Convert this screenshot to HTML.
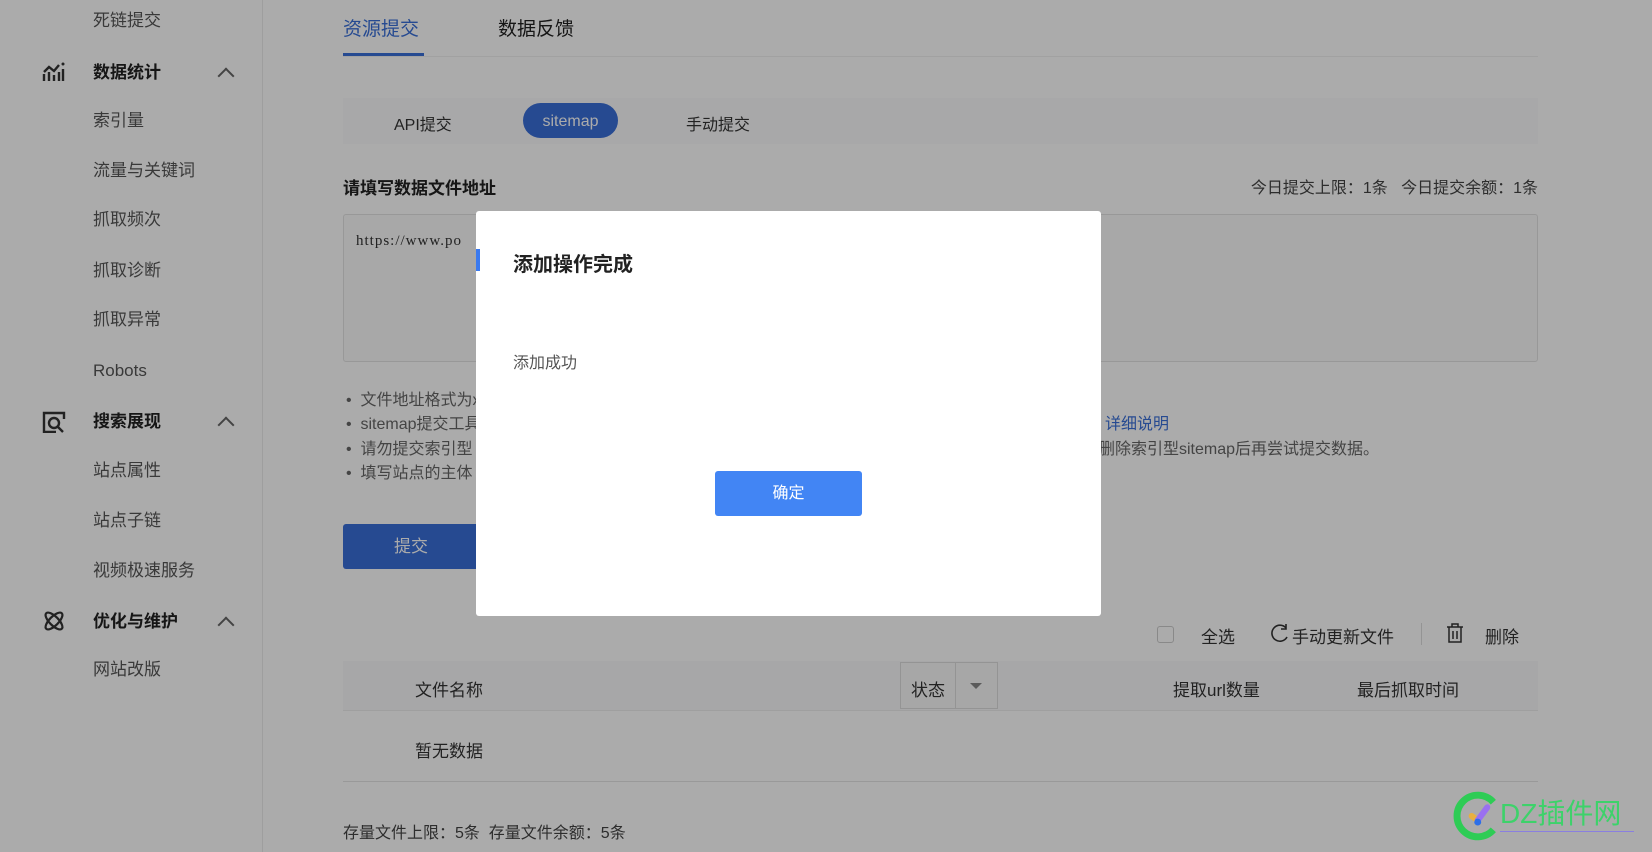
<!DOCTYPE html>
<html><head><meta charset="utf-8"><style>
*{margin:0;padding:0;box-sizing:border-box}
body{width:1652px;height:852px;overflow:hidden;background:#fff;font-family:"Liberation Sans","Noto Sans CJK SC",sans-serif;position:relative;color:#333}
.a{position:absolute;white-space:nowrap}
.side{position:absolute;left:0;top:0;width:263px;height:852px;background:#fff;border-right:1px solid #ececec}
.si{position:absolute;left:93px;font-size:17px;color:#555;line-height:20px}
.sh{position:absolute;left:93px;font-size:17px;color:#222;font-weight:bold;line-height:20px}
.chev{position:absolute;left:220px;width:12px;height:12px;border-left:2px solid #666;border-top:2px solid #666;transform:rotate(45deg)}
.ov{position:absolute;left:0;top:0;width:1652px;height:852px;background:rgba(0,0,0,0.33)}
.bl{font-size:16px;color:#666;line-height:20px}
</style></head><body>
<div class="side">
<div class="si" style="top:11px">死链提交</div>
<svg class="a" style="left:42px;top:61px" width="24" height="22" viewBox="0 0 24 22"><path d="M2 20v-7M7 20v-9M12 20v-6M17 20v-9M2 11l5-5 5 4 5-6" stroke="#333" stroke-width="2.4" fill="none"/><circle cx="21" cy="3" r="1.5" fill="#333"/><path d="M21 8v12" stroke="#333" stroke-width="2.4"/></svg>
<div class="sh" style="top:63px">数据统计</div><div class="chev" style="top:70px"></div>
<div class="si" style="top:111px">索引量</div>
<div class="si" style="top:161px">流量与关键词</div>
<div class="si" style="top:210px">抓取频次</div>
<div class="si" style="top:261px">抓取诊断</div>
<div class="si" style="top:310px">抓取异常</div>
<div class="si" style="top:361px">Robots</div>
<svg class="a" style="left:42px;top:411px" width="24" height="22" viewBox="0 0 24 22"><path d="M22 8V2H2v19h12" stroke="#333" stroke-width="2.4" fill="none"/><circle cx="12" cy="12" r="5" stroke="#333" stroke-width="2.4" fill="none"/><path d="M16 16l5 5" stroke="#333" stroke-width="2.4"/></svg>
<div class="sh" style="top:412px">搜索展现</div><div class="chev" style="top:419px"></div>
<div class="si" style="top:461px">站点属性</div>
<div class="si" style="top:511px">站点子链</div>
<div class="si" style="top:561px">视频极速服务</div>
<svg class="a" style="left:42px;top:609px" width="24" height="24" viewBox="0 0 24 24"><ellipse cx="12" cy="12" rx="11" ry="4.5" transform="rotate(45 12 12)" stroke="#333" stroke-width="2.2" fill="none"/><ellipse cx="12" cy="12" rx="11" ry="4.5" transform="rotate(-45 12 12)" stroke="#333" stroke-width="2.2" fill="none"/></svg>
<div class="sh" style="top:612px">优化与维护</div><div class="chev" style="top:619px"></div>
<div class="si" style="top:660px">网站改版</div>
</div>

<div class="a" style="left:343px;top:14px;font-size:19px;color:#3a6fd8">资源提交</div>
<div class="a" style="left:343px;top:53px;width:81px;height:3px;background:#3a6fd8"></div>
<div class="a" style="left:498px;top:14px;font-size:19px;color:#222">数据反馈</div>
<div class="a" style="left:343px;top:56px;width:1195px;height:1px;background:#f0f0f0"></div>

<div class="a" style="left:343px;top:98px;width:1195px;height:46px;background:#fbfbfc"></div>
<div class="a" style="left:394px;top:111px;font-size:16px;color:#333">API提交</div>
<div class="a" style="left:523px;top:103px;width:95px;height:35px;border-radius:18px;background:#3a6fd8;color:#fff;font-size:16px;text-align:center;line-height:37px">sitemap</div>
<div class="a" style="left:686px;top:111px;font-size:16px;color:#333">手动提交</div>

<div class="a" style="left:343px;top:174px;font-size:17px;font-weight:bold;color:#222">请填写数据文件地址</div>
<div class="a" style="right:114px;top:174px;font-size:16px;color:#444">今日提交上限：1条 &nbsp; 今日提交余额：1条</div>
<div class="a" style="left:343px;top:214px;width:1195px;height:148px;border:1px solid #e3e3e3;background:#fbfbfb;border-radius:3px"></div>
<div class="a" style="left:356px;top:233px;font-family:'Liberation Serif',serif;font-size:15px;color:#333;letter-spacing:1px">https://www.po</div>

<div class="a bl" style="left:346px;top:391px">•&nbsp; 文件地址格式为xml</div>
<div class="a bl" style="left:346px;top:415px">•&nbsp; sitemap提交工具</div>
<div class="a bl" style="left:346px;top:440px">•&nbsp; 请勿提交索引型</div>
<div class="a bl" style="left:346px;top:464px">•&nbsp; 填写站点的主体</div>
<div class="a bl" style="left:1105px;top:415px;color:#3a6fd8">详细说明</div>
<div class="a bl" style="left:1099px;top:440px">删除索引型sitemap后再尝试提交数据。</div>

<div class="a" style="left:343px;top:524px;width:136px;height:45px;background:#3a6fd8;border-radius:3px;color:#fff;font-size:17px;text-align:center;line-height:45px">提交</div>

<div class="a" style="left:1157px;top:626px;width:17px;height:17px;border:1px solid #ccc;border-radius:3px;background:#fff"></div>
<div class="a" style="left:1201px;top:623px;font-size:17px;color:#333">全选</div>
<svg class="a" style="left:1270px;top:623px" width="20" height="20" viewBox="0 0 20 20"><path d="M16 5A8 8 0 1 0 17 14" stroke="#333" stroke-width="1.6" fill="none"/><path d="M16 1v5h-5" stroke="#333" stroke-width="1.6" fill="none"/></svg>
<div class="a" style="left:1292px;top:623px;font-size:17px;color:#333">手动更新文件</div>
<div class="a" style="left:1421px;top:623px;width:1px;height:22px;background:#ddd"></div>
<svg class="a" style="left:1446px;top:623px" width="18" height="20" viewBox="0 0 18 20"><path d="M1 4h16M6 4V1h6v3M3 4v15h12V4M7 8v8M11 8v8" stroke="#333" stroke-width="1.5" fill="none"/></svg>
<div class="a" style="left:1485px;top:623px;font-size:17px;color:#333">删除</div>

<div class="a" style="left:343px;top:661px;width:1195px;height:50px;background:#fafafb;border-bottom:1px solid #eee"></div>
<div class="a" style="left:415px;top:676px;font-size:17px;color:#333">文件名称</div>
<div class="a" style="left:900px;top:662px;width:98px;height:47px;border:1px solid #ddd;background:#fafafa"></div>
<div class="a" style="left:955px;top:662px;width:1px;height:47px;background:#ddd"></div>
<div class="a" style="left:911px;top:676px;font-size:17px;color:#333">状态</div>
<div class="a" style="left:970px;top:683px;border-left:6px solid transparent;border-right:6px solid transparent;border-top:6px solid #888"></div>
<div class="a" style="left:1173px;top:676px;font-size:17px;color:#333">提取url数量</div>
<div class="a" style="left:1357px;top:676px;font-size:17px;color:#333">最后抓取时间</div>
<div class="a" style="left:415px;top:737px;font-size:17px;color:#333">暂无数据</div>
<div class="a" style="left:343px;top:781px;width:1195px;height:1px;background:#e5e5e5"></div>
<div class="a" style="left:343px;top:819px;font-size:16px;color:#444">存量文件上限：5条 &nbsp;存量文件余额：5条</div>

<div class="ov"></div>

<svg class="a" style="left:1450px;top:790px" width="52" height="52" viewBox="0 0 60 60"><path d="M50 14A24 24 0 1 0 50 46" stroke="#2ecc55" stroke-width="8" fill="none"/><path d="M25 30l7 5" stroke="#e8b040" stroke-width="7" stroke-linecap="round"/><path d="M32 35l11-15" stroke="#9a70f0" stroke-width="7" stroke-linecap="round"/><circle cx="32" cy="37" r="4" fill="#2d6fe8"/></svg>
<div class="a" style="left:1500px;top:798px;font-size:28px;color:#3dd26a;line-height:32px">DZ插件网</div>
<div class="a" style="left:1500px;top:831px;width:134px;height:1px;background:#8a7fe0"></div>

<div class="a" style="left:476px;top:211px;width:625px;height:405px;background:#fff;border-radius:3px"></div>
<div class="a" style="left:476px;top:249px;width:4px;height:22px;background:#3a7af0"></div>
<div class="a" style="left:513px;top:248px;font-size:20px;font-weight:bold;color:#222">添加操作完成</div>
<div class="a" style="left:513px;top:349px;font-size:16px;color:#555">添加成功</div>
<div class="a" style="left:715px;top:471px;width:147px;height:45px;background:#4285f4;border-radius:3px;color:#fff;font-size:16px;text-align:center;line-height:45px">确定</div>
</body></html>
